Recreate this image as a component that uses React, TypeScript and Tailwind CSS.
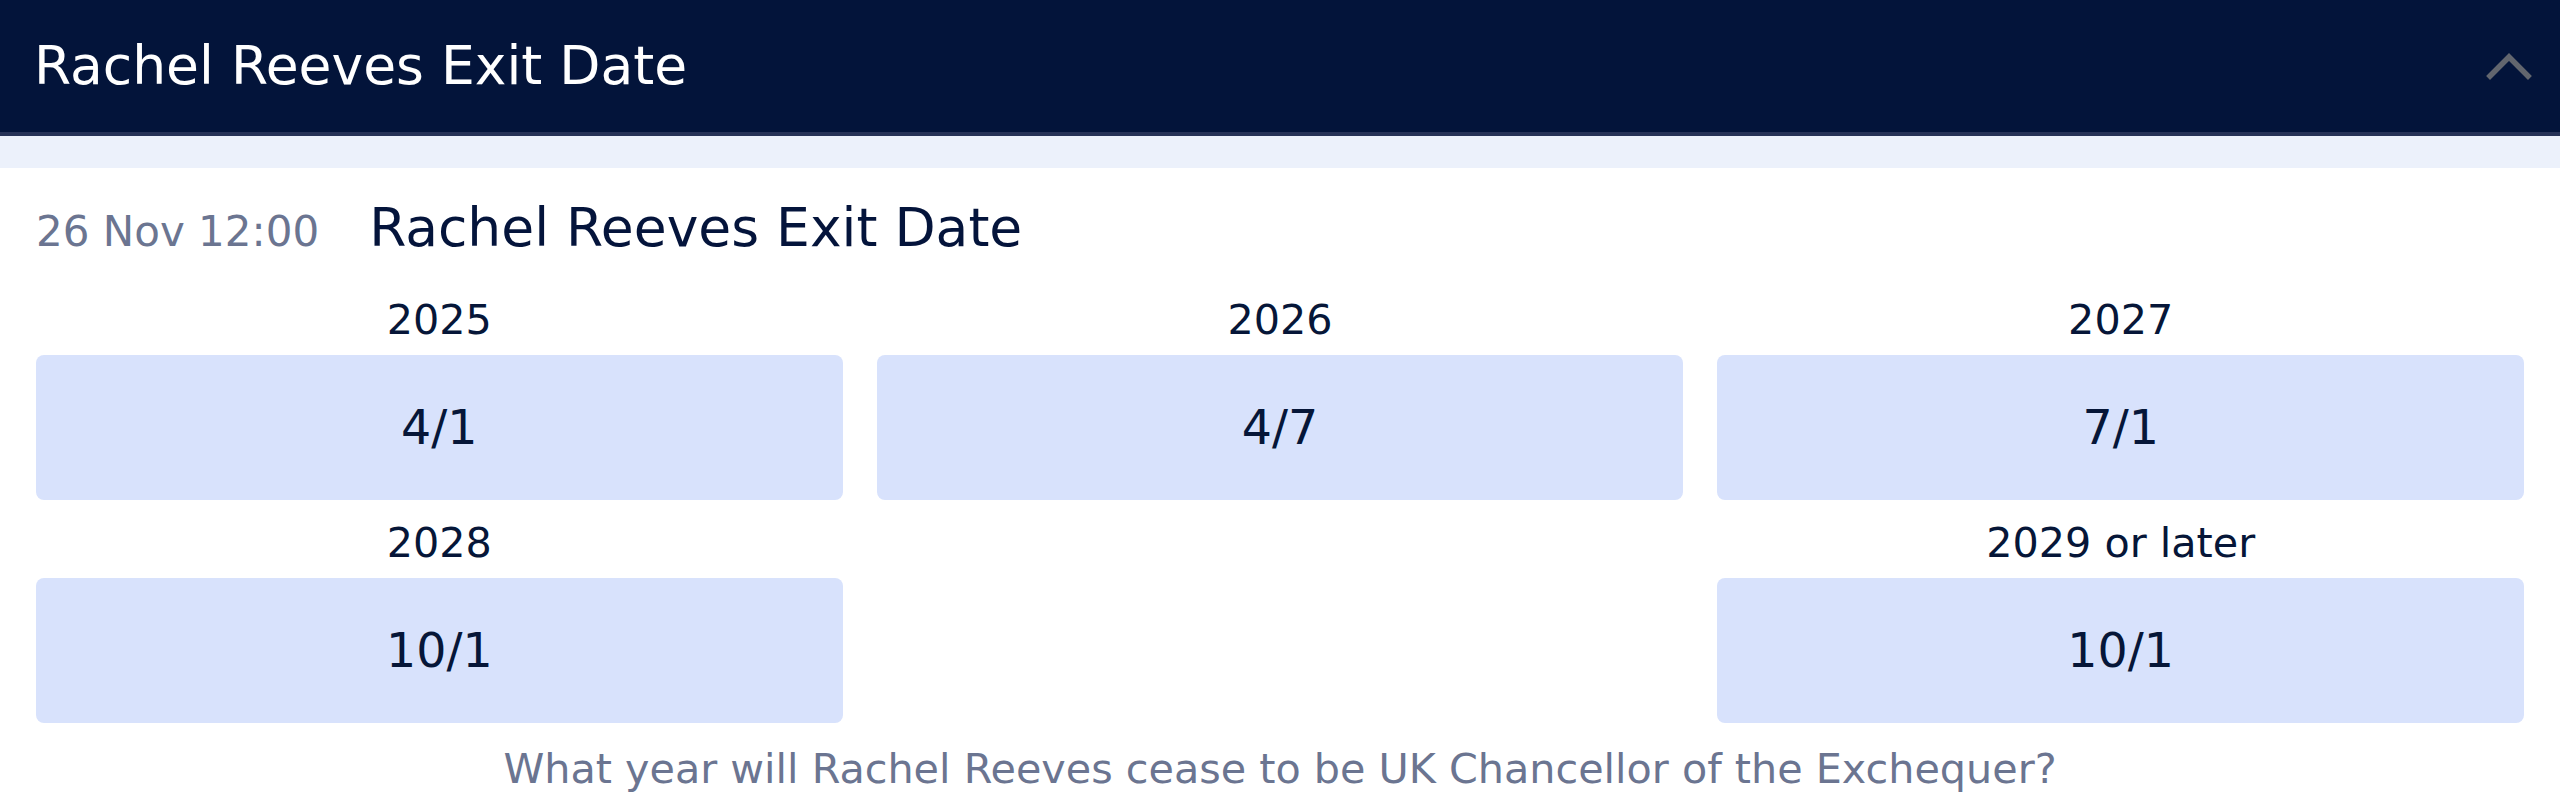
const markets = [
  { label: "2025", odds: "4/1" },
  { label: "2026", odds: "4/7" },
  { label: "2027", odds: "7/1" },
  { label: "2028", odds: "10/1" },
  null,
  { label: "2029 or later", odds: "10/1" },
];

function ChevronUp() {
  return (
    <svg width="46" height="28" viewBox="0 0 46 28" fill="none">
      <polyline points="4,24 23,5 42,24" stroke="#62666e" strokeWidth="5.5" strokeLinecap="square" strokeLinejoin="miter" />
    </svg>
  );
}

function Selection({ label, odds }: { label: string; odds: string }) {
  return (
    <div className="flex flex-col">
      <div className="text-center text-[41.3px] leading-[50px] text-[#061638] mb-[10px]">{label}</div>
      <button className="h-[145px] w-full rounded-[8px] bg-[#d8e2fc] text-[47.5px] text-[#061638] flex items-center justify-center">
        {odds}
      </button>
    </div>
  );
}

export default function App() {
  return (
    <div className="w-full bg-white" style={{ fontFamily: '"DejaVu Sans", Verdana, sans-serif' }}>
      <div className="h-[136px] bg-[#03143a] border-b-4 border-[#263257] flex items-center justify-between pl-[34px] pr-[28px]">
        <span className="text-[53.5px] text-white leading-none">Rachel Reeves Exit Date</span>
        <ChevronUp />
      </div>
      <div className="h-[32px] bg-[#ecf1fb]" />
      <div className="px-[36px] pt-[28px] pb-[14px] border-b-4 border-[#ecf1fb]">
        <div className="flex items-baseline leading-[64px]">
          <span className="text-[42px] text-[#6b7591]">26 Nov 12:00</span>
          <span className="ml-[50px] text-[53.5px] text-[#04143b]">Rachel Reeves Exit Date</span>
        </div>
        <div className="mt-[31px] grid grid-cols-3 gap-x-[34px] gap-y-[18px]">
          {markets.map((m, i) => (m ? <Selection key={i} label={m.label} odds={m.odds} /> : <div key={i} />))}
        </div>
        <div className="mt-[21px] text-center text-[41.3px] leading-[50px] text-[#6b7591]">
          What year will Rachel Reeves cease to be UK Chancellor of the Exchequer?
        </div>
      </div>
    </div>
  );
}
